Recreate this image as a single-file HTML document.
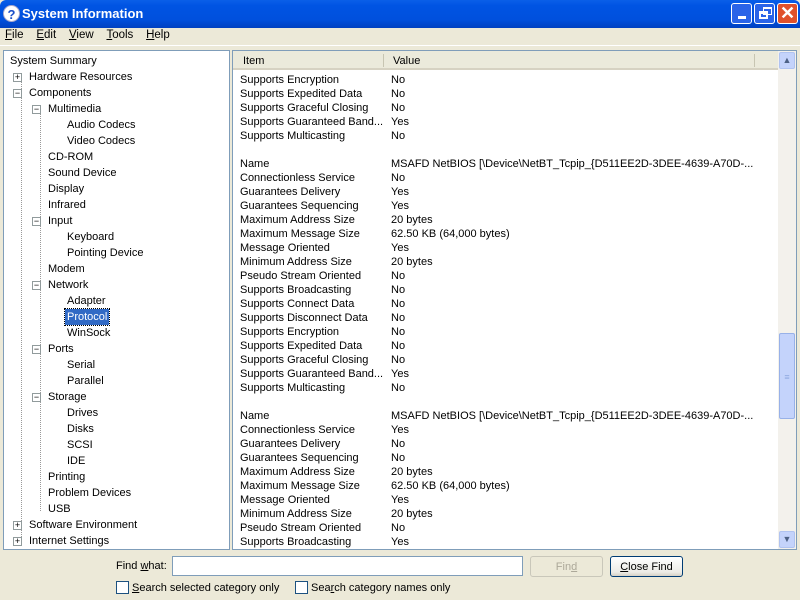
<!DOCTYPE html>
<html><head><style>
*{margin:0;padding:0;box-sizing:border-box}
body{width:800px;height:600px;background:#ece9d8;font-family:"Liberation Sans",sans-serif;font-size:11px;position:relative;overflow:hidden;color:#000}
.a{position:absolute;white-space:nowrap}
#title{left:0;top:0;width:800px;height:28px;background:linear-gradient(#0a5fe8,#0054e3 20%,#0050dd 70%,#0040c0);border-radius:6px 6px 0 0}
.tb{position:absolute;top:3px;width:21px;height:21px;border:1px solid #fff;border-radius:3px;background:#2a64e8}
.tr{line-height:16px;height:16px}
.box{position:absolute;width:9px;height:9px;border:1px solid #919b9c;background:#fff;font-size:9px;line-height:7px;text-align:center;color:#000}
.cb{position:absolute;width:13px;height:13px;border:1px solid #1c5180;background:#fff}
</style></head><body>
<div id="title" class="a">
 <div class="a" style="left:3px;top:5px;width:17px;height:17px;border-radius:50%;background:#fff;color:#1a4ec8;font-weight:bold;font-size:13px;text-align:center;line-height:17px;border:1px solid #aac">?</div>
 <div class="a" style="left:22px;top:6px;color:#fff;font-weight:bold;font-size:13px">System Information</div>
 <div class="tb" style="left:731px"><div class="a" style="left:6px;top:12px;width:8px;height:3px;background:#fff"></div></div>
 <div class="tb" style="left:754px"><div class="a" style="left:4px;top:7px;width:9px;height:8px;border:2px solid #fff;border-top-width:3px"></div><div class="a" style="left:8px;top:3px;width:9px;height:8px;border:1px solid #fff;border-top-width:2px"></div></div>
 <div class="tb" style="left:777px;background:#e0512c;color:#fff;font-size:18px;text-align:center;line-height:19px;font-weight:bold">✕</div>
</div>
<div class="a" style="top:28px;left:5px;line-height:14px;font-size:11.5px">
<u>F</u>ile&nbsp;&nbsp;&nbsp;&nbsp;<u>E</u>dit&nbsp;&nbsp;&nbsp;&nbsp;<u>V</u>iew&nbsp;&nbsp;&nbsp;&nbsp;<u>T</u>ools&nbsp;&nbsp;&nbsp;&nbsp;<u>H</u>elp</div>
<div class="a" style="left:0;top:45px;width:800px;height:1px;background:#fff"></div>
<!-- left pane -->
<div class="a" style="left:3px;top:50px;width:227px;height:500px;background:#fff;border:1px solid #7f9db9"></div>
<div class="a" style="left:0;top:1px">
<div class="a tr" style="left:10px;top:52px">System Summary</div>
<div class="a" style="left:21px;top:80px;height:460px;border-left:1px dotted #999"></div>
<div class="a" style="left:40px;top:112px;height:398px;border-left:1px dotted #999"></div>
<div class="a box" style="left:13px;top:72px">+</div><div class="a tr" style="left:29px;top:68px">Hardware Resources</div>
<div class="a box" style="left:13px;top:88px">−</div><div class="a tr" style="left:29px;top:84px">Components</div>
<div class="a box" style="left:32px;top:104px">−</div><div class="a tr" style="left:48px;top:100px">Multimedia</div>
<div class="a tr" style="left:67px;top:116px">Audio Codecs</div>
<div class="a tr" style="left:67px;top:132px">Video Codecs</div>
<div class="a tr" style="left:48px;top:148px">CD-ROM</div>
<div class="a tr" style="left:48px;top:164px">Sound Device</div>
<div class="a tr" style="left:48px;top:180px">Display</div>
<div class="a tr" style="left:48px;top:196px">Infrared</div>
<div class="a box" style="left:32px;top:216px">−</div><div class="a tr" style="left:48px;top:212px">Input</div>
<div class="a tr" style="left:67px;top:228px">Keyboard</div>
<div class="a tr" style="left:67px;top:244px">Pointing Device</div>
<div class="a tr" style="left:48px;top:260px">Modem</div>
<div class="a box" style="left:32px;top:280px">−</div><div class="a tr" style="left:48px;top:276px">Network</div>
<div class="a tr" style="left:67px;top:292px">Adapter</div>
<div class="a tr" style="left:65px;top:308px;background:#316ac5;color:#fff;padding:0 2px;outline:1px dotted #000">Protocol</div>
<div class="a tr" style="left:67px;top:324px">WinSock</div>
<div class="a box" style="left:32px;top:344px">−</div><div class="a tr" style="left:48px;top:340px">Ports</div>
<div class="a tr" style="left:67px;top:356px">Serial</div>
<div class="a tr" style="left:67px;top:372px">Parallel</div>
<div class="a box" style="left:32px;top:392px">−</div><div class="a tr" style="left:48px;top:388px">Storage</div>
<div class="a tr" style="left:67px;top:404px">Drives</div>
<div class="a tr" style="left:67px;top:420px">Disks</div>
<div class="a tr" style="left:67px;top:436px">SCSI</div>
<div class="a tr" style="left:67px;top:452px">IDE</div>
<div class="a tr" style="left:48px;top:468px">Printing</div>
<div class="a tr" style="left:48px;top:484px">Problem Devices</div>
<div class="a tr" style="left:48px;top:500px">USB</div>
<div class="a box" style="left:13px;top:520px">+</div><div class="a tr" style="left:29px;top:516px">Software Environment</div>
<div class="a box" style="left:13px;top:536px">+</div><div class="a tr" style="left:29px;top:532px">Internet Settings</div>
</div>
<!-- right pane -->
<div class="a" style="left:232px;top:50px;width:565px;height:500px;background:#fff;border:1px solid #7f9db9"></div>
<div class="a" style="left:233px;top:51px;width:545px;height:19px;background:#ebeadb;border-bottom:2px solid #d6d2c2"></div>
<div class="a" style="left:383px;top:54px;width:1px;height:13px;background:#c7c5b2"></div>
<div class="a" style="left:754px;top:54px;width:1px;height:13px;background:#c7c5b2"></div>
<div class="a" style="left:243px;top:55px">Item</div>
<div class="a" style="left:393px;top:55px">Value</div>
<div class="a" style="left:778px;top:51px;width:18px;height:498px;background:#f3f1ec"></div>
<div class="a" style="left:779px;top:52px;width:16px;height:17px;background:#c4d3fb;border:1px solid #b0c3f0;border-radius:2px;color:#4d6185;font-size:9px;text-align:center;line-height:15px">▲</div>
<div class="a" style="left:779px;top:531px;width:16px;height:17px;background:#c4d3fb;border:1px solid #b0c3f0;border-radius:2px;color:#4d6185;font-size:9px;text-align:center;line-height:15px">▼</div>
<div class="a" style="left:779px;top:333px;width:16px;height:86px;background:#c4d3fb;border:1px solid #98b1e8;border-radius:2px;color:#8fa8e0;font-size:9px;text-align:center;line-height:86px">≡</div>
<div class="a" style="left:240px;top:73px;line-height:14px">
Supports Encryption<br>Supports Expedited Data<br>Supports Graceful Closing<br>Supports Guaranteed Band...<br>Supports Multicasting<br><br>Name<br>Connectionless Service<br>Guarantees Delivery<br>Guarantees Sequencing<br>Maximum Address Size<br>Maximum Message Size<br>Message Oriented<br>Minimum Address Size<br>Pseudo Stream Oriented<br>Supports Broadcasting<br>Supports Connect Data<br>Supports Disconnect Data<br>Supports Encryption<br>Supports Expedited Data<br>Supports Graceful Closing<br>Supports Guaranteed Band...<br>Supports Multicasting<br><br>Name<br>Connectionless Service<br>Guarantees Delivery<br>Guarantees Sequencing<br>Maximum Address Size<br>Maximum Message Size<br>Message Oriented<br>Minimum Address Size<br>Pseudo Stream Oriented<br>Supports Broadcasting
</div>
<div class="a" style="left:391px;top:73px;line-height:14px">
No<br>No<br>No<br>Yes<br>No<br><br>MSAFD NetBIOS [\Device\NetBT_Tcpip_{D511EE2D-3DEE-4639-A70D-...<br>No<br>Yes<br>Yes<br>20 bytes<br>62.50 KB (64,000 bytes)<br>Yes<br>20 bytes<br>No<br>No<br>No<br>No<br>No<br>No<br>No<br>Yes<br>No<br><br>MSAFD NetBIOS [\Device\NetBT_Tcpip_{D511EE2D-3DEE-4639-A70D-...<br>Yes<br>No<br>No<br>20 bytes<br>62.50 KB (64,000 bytes)<br>Yes<br>20 bytes<br>No<br>Yes
</div>
<!-- find bar -->
<div class="a" style="left:116px;top:560px">Find <u>w</u>hat:</div>
<div class="a" style="left:172px;top:556px;width:351px;height:20px;background:#fff;border:1px solid #7f9db9"></div>
<div class="a" style="left:530px;top:556px;width:73px;height:21px;border:1px solid #c9c7ba;border-radius:3px;color:#aca899;text-align:center;line-height:20px">Fin<u>d</u></div>
<div class="a" style="left:610px;top:556px;width:73px;height:21px;border:1px solid #003c74;border-radius:3px;background:linear-gradient(#fff,#ecebe6 80%,#d6d0c5);text-align:center;line-height:20px"><u>C</u>lose Find</div>
<div class="cb" style="left:116px;top:581px"></div>
<div class="a" style="left:132px;top:582px"><u>S</u>earch selected category only</div>
<div class="cb" style="left:295px;top:581px"></div>
<div class="a" style="left:311px;top:582px">Sea<u>r</u>ch category names only</div>
</body></html>
